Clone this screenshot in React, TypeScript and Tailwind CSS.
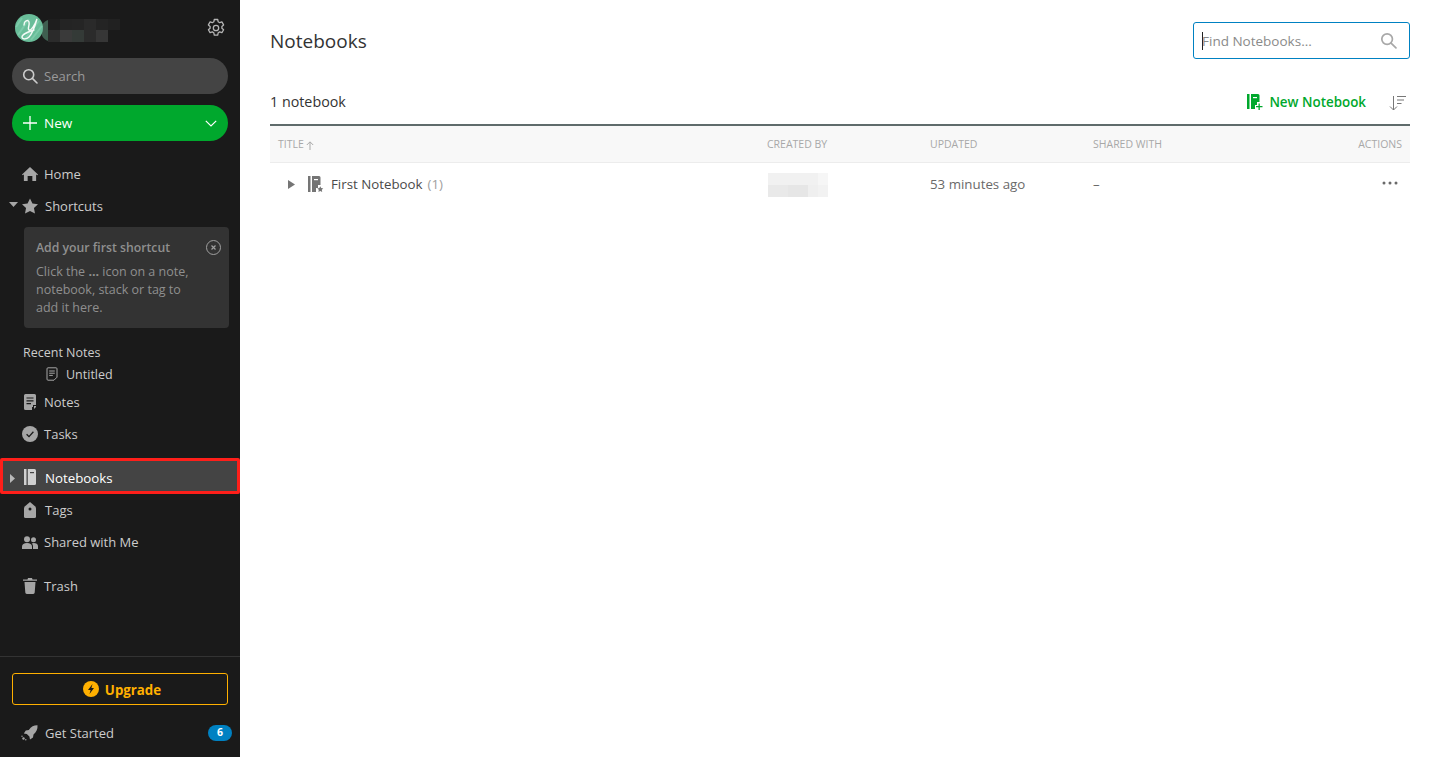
import React from "react";

const FONT = "[font-family:'Open_Sans','Noto_Sans',sans-serif]";

function Avatar() {
  return (
    <svg width="28" height="28" viewBox="0 0 28 28" className="relative z-10 shrink-0">
      <circle cx="14" cy="14" r="14" fill="#69bd99" />
      <path d="M3 21 L14 5 M9 26 L24 7 M1 13 L7 4 M16 26 L27 12" stroke="#7ccaa9" strokeWidth="2" />
      <path d="M9 11c0-4 4-6 5-3 1 3-2 7 0 8 2 1 6-5 8-11-2 7-4 14-8 18-3 3-7 2-7 0 0-3 6-5 12-7" fill="none" stroke="#f4fbf7" strokeWidth="1.400" strokeLinecap="round" />
    </svg>
  );
}

function NameMosaic() {
  const top = ["#1e1e1e", "#242424", "#252525", "#2a2a2a", "#242424", "#212121"];
  const bot = ["#2b2b2b", "#3a3a3a", "#343a37", "#2b2b2b", "#363636"];
  return (
    <svg width="80" height="23" viewBox="0 0 80 23" className="-ml-[2px] mt-[5px] shrink-0" shapeRendering="crispEdges">
      <path d="M7 1C2 3 0 7 0 11.500S2 20 7 22z" fill="#3f5f50" shapeRendering="auto" />
      {top.map((c, i) => <rect key={i} x={7 + i * 12} y="0" width="12" height="11" fill={c} />)}
      {bot.map((c, i) => <rect key={i} x={7 + i * 12} y="11" width="12" height="12" fill={c} />)}
    </svg>
  );
}

function Gear() {
  return (
    <svg width="20" height="20" viewBox="0 0 20 20" fill="none" stroke="#b5b5b5" strokeWidth="1.300" strokeLinejoin="round">
      <path d="M8.300 1.500h3.400l.5 2.300 1.500.9 2.200-.8 1.700 3-1.700 1.500v1.800l1.700 1.500-1.700 3-2.200-.8-1.500.9-.5 2.300H8.300l-.5-2.300-1.500-.9-2.200.8-1.700-3 1.700-1.500V8.400L2.400 6.900l1.700-3 2.200.8 1.500-.9z" />
      <circle cx="10" cy="10" r="2.700" />
    </svg>
  );
}

function SearchIcon({ color = "#ccc", s = 16 }: { color?: string; s?: number }) {
  return (
    <svg width={s} height={s} viewBox="0 0 16 16" fill="none" stroke={color} strokeWidth="1.600">
      <circle cx="6.700" cy="6.700" r="5" />
      <path d="M10.400 10.400 15 15" strokeLinecap="round" />
    </svg>
  );
}

const G = "#a6a6a6";

function HomeIcon() {
  return (
    <svg width="17" height="16" viewBox="0 0 17 16" fill={G}>
      <path d="M8.500.5 17 8.500l-.6.9-1.400-1V15.500H11V10H6V15.500H2V8.400L.6 9.400 0 8.500z" />
    </svg>
  );
}
function StarIcon() {
  return (
    <svg width="17" height="16" viewBox="0 0 17 16" fill={G}>
      <path d="M8.500 0l2.600 5.300 5.900.8-4.300 4.100 1.100 5.800-5.300-2.800L3.200 16l1.100-5.800L0 6.100l5.900-.8z" />
    </svg>
  );
}
function NoteSmall() {
  return (
    <svg width="12" height="14" viewBox="0 0 12 14" fill="none" stroke={G} strokeWidth="1">
      <path d="M2 .8h8a1 1 0 0 1 1 1v8.400L8 13.200H2a1 1 0 0 1-1-1V1.800a1 1 0 0 1 1-1z" />
      <path d="M3.200 4h5.600M3.200 6.200h5.600M3.200 8.400h3.600" />
    </svg>
  );
}
function NotesIcon() {
  return (
    <svg width="12" height="16" viewBox="0 0 12 16">
      <path d="M1.500 0h9A1.500 1.500 0 0 1 12 1.500V11H9v2H8v3H1.500A1.500 1.500 0 0 1 0 14.500v-13A1.500 1.500 0 0 1 1.500 0z" fill={G} />
      <path d="M2.500 4h7M2.500 6.800h7M2.500 9.600h4.500" stroke="#1a1a1a" strokeWidth="1.200" />
      <path d="M10 12h2v1l-2 2z" fill={G} />
    </svg>
  );
}
function TasksIcon() {
  return (
    <svg width="16" height="16" viewBox="0 0 16 16">
      <circle cx="8" cy="8" r="8" fill={G} />
      <path d="M4.600 8.200l2.400 2.400 4.400-4.800" fill="none" stroke="#1a1a1a" strokeWidth="1.300" />
    </svg>
  );
}
function NotebookNav() {
  return (
    <svg width="12" height="16" viewBox="0 0 12 16" fill="#cfcfcf" className="block">
      <rect x="0" y="0" width="2.500" height="16" />
      <path d="M3.800 0h6.700A1.500 1.500 0 0 1 12 1.500v13a1.500 1.500 0 0 1-1.500 1.500H3.800z" />
      <rect x="6" y="3" width="4" height="1.200" fill="#444" />
    </svg>
  );
}
function TagIcon() {
  return (
    <svg width="12" height="16" viewBox="0 0 12 16">
      <path d="M6 0l5 4.200a3 3 0 0 1 1 2V14.500A1.500 1.500 0 0 1 10.500 16h-9A1.500 1.500 0 0 1 0 14.500V6.200a3 3 0 0 1 1-2z" fill={G} />
      <circle cx="6" cy="7" r="1.500" fill="#1a1a1a" />
    </svg>
  );
}
function SharedIcon() {
  return (
    <svg width="16" height="13" viewBox="0 0 16 13" fill={G}>
      <circle cx="5" cy="3.200" r="3" />
      <path d="M0 13v-2.500C0 8.500 2 7 5 7s5 1.500 5 3.500V13z" />
      <circle cx="11.500" cy="3.800" r="2.500" />
      <path d="M11 13v-2.800c0-1-.5-2-1.300-2.700.6-.3 1.300-.5 2.100-.5 2.300 0 4.200 1.200 4.200 3V13z" />
    </svg>
  );
}
function TrashIcon() {
  return (
    <svg width="14" height="16" viewBox="0 0 14 16" fill={G}>
      <path d="M5 0h4l.5 1.500H14v1.300H0V1.500h4.500z" />
      <path d="M1.500 4h11l-.8 10.600A1.500 1.500 0 0 1 10.200 16H3.800a1.500 1.500 0 0 1-1.500-1.400z" />
    </svg>
  );
}
function Rocket() {
  return (
    <svg width="17" height="16" viewBox="0 0 17 16" fill={G}>
      <path d="M16.500.3c.3 3.700-1 6.700-4 9.200l-.5 3-3 2-.6-3L5.800 9l-3-.6 2-3 3-.5C10.300 1.500 13 .2 16.500.3z" />
      <circle cx="2.500" cy="13.500" r="1.200" />
      <circle cx="4.800" cy="14.800" r=".7" />
      <circle cx="1" cy="11.300" r=".7" />
    </svg>
  );
}
function Bolt() {
  return (
    <svg width="16" height="16" viewBox="0 0 16 16">
      <circle cx="8" cy="8" r="8" fill="#ffb000" />
      <path d="M9.500 3 5 9h2.600L6.500 13 11 7H8.400z" fill="#1a1a1a" />
    </svg>
  );
}
function Caret({ dir, color = "#a6a6a6", w = 5 }: { dir: "right" | "down"; color?: string; w?: number }) {
  return dir === "right" ? (
    <svg width={w} height="9" viewBox="0 0 5 9" preserveAspectRatio="none" fill={color} className="block"><path d="M0 0l5 4.500L0 9z" /></svg>
  ) : (
    <svg width="9" height="5" viewBox="0 0 9 5" fill={color}><path d="M0 0h9L4.500 5z" /></svg>
  );
}
function NotebookStar({ color = "#757575" }: { color?: string }) {
  return (
    <svg width="16" height="17" viewBox="0 0 16 17">
      <rect x="0" y="0" width="2.500" height="16" fill={color} />
      <path d="M4 0h7a1.500 1.500 0 0 1 1.500 1.500V9H10v3H8v4H4z" fill={color} />
      <rect x="6" y="3" width="4" height="1.200" fill="#fff" />
      <path d="M12.300 10.200l.9 1.900 2.100.3-1.500 1.400.4 2.100-1.900-1-1.900 1 .4-2.100-1.500-1.400 2.100-.3z" fill={color} />
    </svg>
  );
}
function NotebookPlus() {
  const c = "#00a82d";
  return (
    <svg width="16" height="16" viewBox="0 0 16 16">
      <rect x="0" y="0" width="2.500" height="15" fill={c} />
      <path d="M4 0h7a1.500 1.500 0 0 1 1.500 1.500V8H10v3H8v4H4z" fill={c} />
      <rect x="6" y="3" width="4" height="1.200" fill="#fff" />
      <path d="M11.500 9.500h1.300v2.500h2.700v1.300h-2.700V16h-1.300v-2.700H9V12h2.500z" fill={c} />
    </svg>
  );
}
function SortIcon() {
  return (
    <svg width="18" height="16" viewBox="0 0 18 16" fill="none" stroke="#777" strokeWidth="1">
      <path d="M4.500 1v14M1 11.500l3.500 3.500L8 11.500" />
      <path d="M8 1.500h9M8 5h7M8 8.500h4.500" />
    </svg>
  );
}

function NavRow({ icon, label, mt, gap }: { icon: React.ReactNode; label: string; mt?: string; gap?: string }) {
  return (
    <div className={`flex h-8 shrink-0 items-center pl-[22px] ${mt ?? ""}`}>
      <span className="flex w-4 items-center justify-center">{icon}</span>
      <span className={`${gap ?? "ml-[6px]"} pt-[2px] text-[13px] text-[#cccccc]`}>{label}</span>
    </div>
  );
}

const creatorCells = [
  ["#f1f1f1", "#f1f1f1", "#f1f1f1", "#f1f1f1", "#f1f1f1", "#f6f6f6"],
  ["#e9e9e9", "#e9e9e9", "#e6e6e6", "#e6e6e6", "#efefef", "#f2f2f2"],
];

export default function App() {
  return (
    <div className={`flex h-screen w-full overflow-hidden bg-white ${FONT}`}>
      <aside className="flex h-full w-[240px] shrink-0 flex-col bg-[#1a1a1a]">
        <div className="flex h-[58px] shrink-0 items-start pl-[15px] pr-[14px] pt-[14px]">
          <Avatar />
          <NameMosaic />
          <span className="ml-auto mt-[4px]"><Gear /></span>
        </div>
        <div className="mx-3 flex h-9 shrink-0 items-center rounded-full bg-[#444444] pl-[10px]">
          <SearchIcon />
          <span className="ml-[6px] pt-[2px] text-[13px] text-[#9a9a9a]">Search</span>
        </div>
        <div className="mx-3 mt-[11px] flex h-9 shrink-0 items-center rounded-full bg-[#00a82d] pl-[11px] pr-[11px]">
          <svg width="14" height="14" viewBox="0 0 14 14" stroke="#fff" strokeWidth="1.300"><path d="M7 0v14M0 7h14" /></svg>
          <span className="ml-[7px] text-[13.5px] font-medium text-white">New</span>
          <svg className="ml-auto" width="12" height="7" viewBox="0 0 12 7" fill="none" stroke="#fff" strokeWidth="1.200"><path d="M.8.8 6 6l5.200-5.200" /></svg>
        </div>

        <NavRow icon={<HomeIcon />} label="Home" mt="mt-[17px]" />
        <div className="relative">
          <span className="absolute left-[9px] top-[12px]"><Caret dir="down" /></span>
          <NavRow icon={<StarIcon />} label="Shortcuts" gap="ml-[7px]" />
        </div>

        <div className="ml-6 mr-[11px] mt-[5px] h-[101px] shrink-0 rounded-[4px] bg-[#333333] pl-3 pr-2 pt-[10px]">
          <div className="flex items-start justify-between">
            <span className="text-[12.25px] font-semibold leading-[22px] text-[#8f8f8f]">Add your first shortcut</span>
            <svg className="mt-[3px]" width="15" height="15" viewBox="0 0 15 15" fill="none" stroke="#a0a0a0" strokeWidth="1"><circle cx="7.500" cy="7.500" r="7" /><path d="M5.500 5.500l4 4M9.500 5.500l-4 4" strokeWidth="1.200" /></svg>
          </div>
          <p className="mt-[4px] text-[12.5px] leading-[18px] text-[#8f8f8f]">
            Click the <b className="font-bold">...</b> icon on a note,<br />notebook, stack or tag to<br />add it here.
          </p>
        </div>

        <div className="ml-[23px] mt-[14px] flex h-[21px] shrink-0 items-center pt-[2px] text-[12.5px] text-[#cccccc]">Recent Notes</div>
        <div className="ml-[46px] flex h-[22px] shrink-0 items-center text-[12.5px] text-[#cccccc]">
          <NoteSmall />
          <span className="ml-2 pt-[2px]">Untitled</span>
        </div>
        <NavRow icon={<NotesIcon />} label="Notes" mt="mt-[1px]" />
        <NavRow icon={<TasksIcon />} label="Tasks" />

        <div className="mt-[8px] flex h-[36px] shrink-0 items-center rounded-[2px] border-[3px] border-[#ff1f1a] bg-[#444444]">
          <span className="ml-[7px] mt-[4px]"><Caret dir="right" color="#b8b8b8" /></span>
          <span className="ml-[9px] mt-[2px]"><NotebookNav /></span>
          <span className="ml-[9px] pt-[6px] text-[13.3px] font-medium text-white">Notebooks</span>
        </div>
        <NavRow icon={<TagIcon />} label="Tags" gap="ml-[7px]" />
        <NavRow icon={<SharedIcon />} label="Shared with Me" />
        <NavRow icon={<TrashIcon />} label="Trash" mt="mt-3" />

        <div className="mt-auto shrink-0 border-t border-[#333333] pb-2 pt-4">
          <div className="mx-3 flex h-8 items-center justify-center rounded-[3px] border border-[#ffb000] pl-1">
            <Bolt />
            <span className="ml-[6px] pt-[3px] text-[13.3px] font-bold text-[#ffb000]">Upgrade</span>
          </div>
          <div className="mt-3 flex h-[32px] items-center pl-[21px] pr-2">
            <Rocket />
            <span className="ml-[7px] pt-[2px] text-[13px] text-[#cccccc]">Get Started</span>
            <span className="ml-auto flex h-4 w-6 items-center justify-center rounded-full bg-[#0081c2] text-[10.5px] font-bold text-white">6</span>
          </div>
        </div>
      </aside>

      <main className="flex min-w-0 flex-1 flex-col px-[30px] pt-[22px]">
        <div className="flex h-[37px] items-center justify-between">
          <h1 className="pt-[2px] text-[19px] font-normal text-[#333333]">Notebooks</h1>
          <div className="flex h-[37px] w-[217px] items-center rounded-[3px] border border-[#0081c2] pl-2 pr-[12px]">
            <span className="mr-[-1px] h-[18px] w-px bg-[#222]" />
            <span className="pt-[2px] text-[13.5px] text-[#8a8a8a]">Find Notebooks...</span>
            <span className="ml-auto"><SearchIcon color="#a8a8a8" s={17} /></span>
          </div>
        </div>

        <div className="mt-[25px] flex h-[42px] items-center border-b-2 border-[#5f6b6b] pb-[3px]">
          <span className="pb-[2px] text-[14.3px] font-medium text-[#333333]">1 notebook</span>
          <span className="ml-auto flex items-center">
            <NotebookPlus />
            <span className="ml-[6px] text-[13.4px] font-semibold text-[#00a82d]">New Notebook</span>
          </span>
          <span className="ml-[23px] mr-[3px]"><SortIcon /></span>
        </div>

        <div className="grid h-[37px] grid-cols-[497px_163px_163px_1fr] items-center border-b border-[#ececec] bg-[#f8f8f8] pr-2 pt-[2px] text-[10.5px] text-[#a8a8a8]">
          <span className="flex items-center pl-2">
            TITLE
            <svg className="ml-[2px]" width="8" height="9" viewBox="0 0 8 9" fill="none" stroke="#a8a8a8" strokeWidth="1"><path d="M4 9V1M.8 4 4 .8 7.200 4" /></svg>
          </span>
          <span>CREATED BY</span>
          <span>UPDATED</span>
          <span className="flex justify-between"><span>SHARED WITH</span><span>ACTIONS</span></span>
        </div>

        <div className="grid h-[43px] grid-cols-[497px_163px_163px_1fr] items-center pr-2 text-[13.3px] text-[#6a6a6a]">
          <span className="flex items-center pl-[18px]">
            <Caret dir="right" color="#757575" w={7} />
            <span className="ml-[13px]"><NotebookStar /></span>
            <span className="ml-[7px] text-[#4a4a4a]">First Notebook</span>
            <span className="ml-[5px] text-[#a0a0a0]">(1)</span>
          </span>
          <svg width="60" height="24" viewBox="0 0 60 24" className="ml-px" shapeRendering="crispEdges">
            {creatorCells.map((row, y) => row.map((c, x) => <rect key={`${x}-${y}`} x={x * 10} y={y * 12} width="10" height="12" fill={c} />))}
          </svg>
          <span>53 minutes ago</span>
          <span className="flex items-center justify-between">
            <span>–</span>
            <svg className="mb-1 mr-1" width="16" height="4" viewBox="0 0 16 4" fill="#6a6a6a"><circle cx="2" cy="2" r="1.500" /><circle cx="8" cy="2" r="1.500" /><circle cx="14" cy="2" r="1.500" /></svg>
          </span>
        </div>
      </main>
    </div>
  );
}
